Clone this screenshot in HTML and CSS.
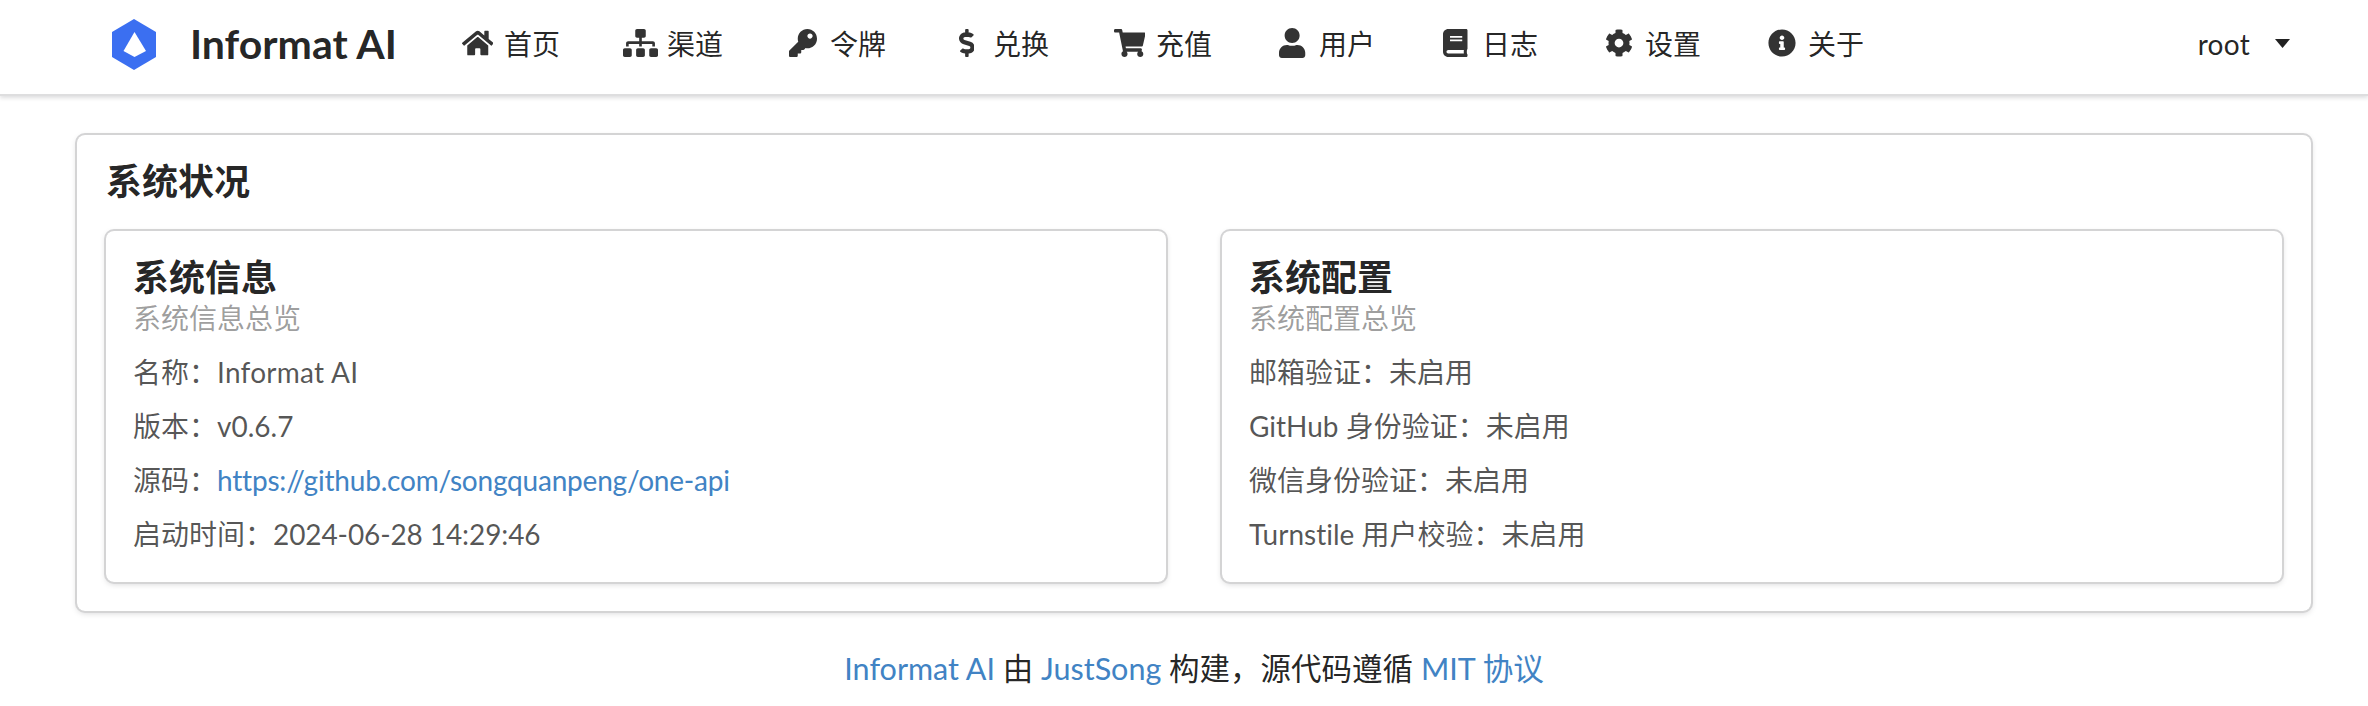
FILE: index.html
```html
<!DOCTYPE html>
<html lang="zh-CN">
<head>
<meta charset="utf-8">
<title>Informat AI</title>
<link rel="stylesheet" href="styles.css">
</head>
<body>
<header class="topbar">
  <a class="brand">
    <svg class="logo" viewBox="0 0 44 51"><path fill="#3b6ff1" d="M22 0L44 13V38L22 51L0 38V13Z"/><path fill="#fff" d="M22.500 13L34 32L22.500 38L11.500 32Z"/></svg>
    <span>Informat AI</span>
  </a>
  <a class="navitem"><span class="ico"><svg viewBox="0 0 576 512"><path d="M280.37 148.26L96 300.11V464a16 16 0 0 0 16 16l112.06-.29a16 16 0 0 0 15.92-16V368a16 16 0 0 1 16-16h64a16 16 0 0 1 16 16v95.64a16 16 0 0 0 16 16.05L464 480a16 16 0 0 0 16-16V300L295.67 148.26a12.19 12.19 0 0 0-15.3 0zM571.6 251.47L488 182.56V44.05a12 12 0 0 0-12-12h-56a12 12 0 0 0-12 12v72.61L318.47 43a48 48 0 0 0-61 0L4.34 251.47a12 12 0 0 0-1.6 16.9l25.5 31A12 12 0 0 0 45.15 301l235.22-193.74a12.19 12.19 0 0 1 15.3 0L530.9 301a12 12 0 0 0 16.9-1.6l25.5-31a12 12 0 0 0-1.7-16.93z"/></svg></span>首页</a>
  <a class="navitem"><span class="ico"><svg viewBox="0 0 640 512"><path d="M128 352H32c-17.67 0-32 14.33-32 32v96c0 17.67 14.33 32 32 32h96c17.67 0 32-14.33 32-32v-96c0-17.67-14.33-32-32-32zm-24-80h192v48h48v-48h192v48h48v-57.59c0-21.17-17.23-38.41-38.41-38.41H344v-64h40c17.67 0 32-14.33 32-32V32c0-17.67-14.33-32-32-32H256c-17.67 0-32 14.33-32 32v96c0 17.67 14.33 32 32 32h40v64H94.41C73.23 224 56 241.23 56 262.41V320h48v-48zm264 80h-96c-17.67 0-32 14.33-32 32v96c0 17.67 14.33 32 32 32h96c17.67 0 32-14.33 32-32v-96c0-17.67-14.33-32-32-32zm240 0h-96c-17.67 0-32 14.33-32 32v96c0 17.67 14.33 32 32 32h96c17.67 0 32-14.33 32-32v-96c0-17.67-14.33-32-32-32z"/></svg></span>渠道</a>
  <a class="navitem"><span class="ico"><svg viewBox="0 0 512 512"><path d="M512 176.001C512 273.203 433.202 352 336 352c-11.22 0-22.19-1.062-32.827-3.069l-24.012 27.014A23.999 23.999 0 0 1 261.223 384H224v40c0 13.255-10.745 24-24 24h-40v40c0 13.255-10.745 24-24 24H24c-13.255 0-24-10.745-24-24v-78.059c0-6.365 2.529-12.47 7.029-16.971l161.802-161.802C163.108 213.814 160 195.271 160 176 160 78.798 238.797.001 335.999 0 433.488-.001 512 78.511 512 176.001zM336 128c0 26.51 21.49 48 48 48s48-21.49 48-48-21.49-48-48-48-48 21.49-48 48z"/></svg></span>令牌</a>
  <a class="navitem"><span class="ico"><svg viewBox="0 0 288 512"><path d="M209.2 233.4l-108-31.6C88.7 198.2 80 186.5 80 173.5c0-16.3 13.2-29.5 29.5-29.5h66.3c12.2 0 24.2 3.7 34.2 10.5 6.1 4.1 14.3 3.1 19.5-2l34.8-34c7.1-6.9 6.1-18.4-1.8-24.5C238 74.8 207.4 64.1 176 64V16c0-8.8-7.2-16-16-16h-32c-8.8 0-16 7.2-16 16v48h-2.5C45.8 64-5.4 118.7.5 183.6c4.2 46.1 39.4 83.6 83.8 96.6l102.5 30c12.5 3.7 21.2 15.3 21.2 28.3 0 16.3-13.2 29.5-29.5 29.5h-66.3C100 368 88 364.3 78 357.5c-6.1-4.1-14.3-3.1-19.5 2l-34.8 34c-7.1 6.9-6.1 18.4 1.8 24.5 24.5 19.2 55.1 29.9 86.5 30v48c0 8.8 7.2 16 16 16h32c8.8 0 16-7.2 16-16v-48.2c46.6-.9 90.3-28.6 105.7-72.7 21.5-61.6-14.6-124.8-72.5-141.7z"/></svg></span>兑换</a>
  <a class="navitem"><span class="ico"><svg viewBox="0 0 576 512"><path d="M528.12 301.319l47.273-208C578.806 78.301 567.391 64 551.99 64H159.208l-9.166-44.81C147.758 8.021 137.93 0 126.529 0H24C10.745 0 0 10.745 0 24v16c0 13.255 10.745 24 24 24h69.883l70.248 343.435C147.325 417.1 136 435.222 136 456c0 30.928 25.072 56 56 56s56-25.072 56-56c0-15.674-6.447-29.835-16.824-40h209.647C430.447 426.165 424 440.326 424 456c0 30.928 25.072 56 56 56s56-25.072 56-56c0-22.172-12.888-41.332-31.579-50.405l5.517-24.276c3.413-15.018-8.002-29.319-23.403-29.319H218.117l-6.545-32h293.145c11.206 0 20.92-7.754 23.403-18.681z"/></svg></span>充值</a>
  <a class="navitem"><span class="ico ico-user"><svg viewBox="0 0 448 512"><path d="M224 256c70.700 0 128-57.300 128-128S294.700 0 224 0 96 57.300 96 128s57.300 128 128 128zm89.600 32h-16.700c-22.200 10.200-46.900 16-72.900 16s-50.600-5.800-72.900-16h-16.700C60.200 288 0 348.200 0 422.400V464c0 26.500 21.500 48 48 48h352c26.500 0 48-21.500 48-48v-41.600c0-74.200-60.200-134.400-134.400-134.400z"/></svg></span>用户</a>
  <a class="navitem"><span class="ico"><svg viewBox="0 0 448 512"><path d="M448 360V24c0-13.300-10.700-24-24-24H96C43 0 0 43 0 96v320c0 53 43 96 96 96h328c13.300 0 24-10.700 24-24v-16c0-7.500-3.500-14.300-8.900-18.700-4.200-15.400-4.200-59.300 0-74.700 5.400-4.300 8.900-11.100 8.900-18.600zM128 134c0-3.300 2.700-6 6-6h212c3.300 0 6 2.700 6 6v20c0 3.300-2.700 6-6 6H134c-3.300 0-6-2.700-6-6v-20zm0 64c0-3.300 2.700-6 6-6h212c3.300 0 6 2.700 6 6v20c0 3.300-2.700 6-6 6H134c-3.300 0-6-2.700-6-6v-20zm253.400 250H96c-17.700 0-32-14.300-32-32 0-17.600 14.400-32 32-32h285.400c-1.900 17.100-1.900 46.900 0 64z"/></svg></span>日志</a>
  <a class="navitem"><span class="ico"><svg viewBox="0 0 512 512"><path d="M487.400 315.700l-42.600-24.600c4.300-23.200 4.300-47 0-70.200l42.600-24.600c4.900-2.800 7.100-8.600 5.500-14-11.100-35.600-30-67.800-54.700-94.600-3.800-4.100-10-5.100-14.800-2.300L380.800 110c-17.900-15.400-38.500-27.300-60.800-35.100V25.800c0-5.600-3.900-10.500-9.400-11.700-36.700-8.200-74.300-7.800-109.200 0-5.500 1.200-9.400 6.100-9.400 11.700V75c-22.200 7.900-42.800 19.800-60.800 35.100L88.700 85.500c-4.900-2.800-11-1.900-14.800 2.300-24.700 26.700-43.600 58.900-54.700 94.600-1.700 5.400.6 11.200 5.500 14L67.300 221c-4.300 23.200-4.300 47 0 70.200l-42.600 24.600c-4.900 2.800-7.100 8.600-5.500 14 11.100 35.600 30 67.800 54.700 94.600 3.800 4.100 10 5.100 14.800 2.300l42.600-24.600c17.900 15.400 38.500 27.300 60.800 35.100v49.200c0 5.600 3.900 10.500 9.400 11.700 36.700 8.200 74.300 7.800 109.200 0 5.500-1.200 9.400-6.100 9.400-11.700v-49.200c22.200-7.900 42.800-19.800 60.800-35.100l42.600 24.600c4.900 2.800 11 1.900 14.800-2.300 24.700-26.700 43.600-58.900 54.700-94.600 1.500-5.500-.7-11.300-5.600-14.100zM256 336c-44.100 0-80-35.900-80-80s35.900-80 80-80 80 35.900 80 80-35.900 80-80 80z"/></svg></span>设置</a>
  <a class="navitem"><span class="ico"><svg viewBox="0 0 512 512"><path d="M256 8C119.043 8 8 119.083 8 256c0 136.997 111.043 248 248 248s248-111.003 248-248C504 119.083 392.957 8 256 8zm0 110c23.196 0 42 18.804 42 42s-18.804 42-42 42-42-18.804-42-42 18.804-42 42-42zm56 254c0 6.627-5.373 12-12 12h-88c-6.627 0-12-5.373-12-12v-24c0-6.627 5.373-12 12-12h12v-64h-12c-6.627 0-12-5.373-12-12v-24c0-6.627 5.373-12 12-12h64c6.627 0 12 5.373 12 12v100h12c6.627 0 12 5.373 12 12v24z"/></svg></span>关于</a>
  <a class="navitem usermenu"><span class="username">root</span><svg class="caret" viewBox="0 0 17 9"><path d="M1 0H16L8.500 9Z"/></svg></a>
</header>
<main class="panel">
  <h2 class="panel-title">系统状况</h2>
  <div class="cols">
    <section class="card">
      <h3 class="card-title">系统信息</h3>
      <div class="card-meta">系统信息总览</div>
      <p class="line">名称：<span class="latin-wide">Informat AI</span></p>
      <p class="line">版本：v0.6.7</p>
      <p class="line">源码：<a class="link link-url">https://github.com/songquanpeng/one-api</a></p>
      <p class="line">启动时间：<span class="date">2024-06-28 14:29:46</span></p>
    </section>
    <section class="card">
      <h3 class="card-title">系统配置</h3>
      <div class="card-meta">系统配置总览</div>
      <p class="line">邮箱验证：未启用</p>
      <p class="line">GitHub 身份验证：未启用</p>
      <p class="line">微信身份验证：未启用</p>
      <p class="line">Turnstile 用户校验：未启用</p>
    </section>
  </div>
</main>
<footer class="foot"><a class="link">Informat AI</a> 由 <a class="link">JustSong</a> 构建，源代码遵循 <a class="link">MIT 协议</a></footer>
</body>
</html>
```
FILE: styles.css
```css
* { box-sizing: border-box; }
html, body { margin: 0; padding: 0; background: #fff; }
body {
  font-family: Lato, "Noto Sans CJK SC", "Noto Sans", sans-serif;
  font-size: 28px;
  line-height: 40px;
  color: rgba(0,0,0,.87);
  font-variant-ligatures: none;
  overflow: hidden;
}
.topbar {
  display: flex;
  align-items: stretch;
  height: 96px;
  padding: 0 45px 0 80px;
  background: #fff;
  border-bottom: 2px solid rgba(34,36,38,.15);
  box-shadow: 0 2px 4px rgba(34,36,38,.15);
}
.brand, .navitem {
  display: flex;
  align-items: center;
  padding: 0 32px 7px;
}
.brand { font-size: 41px; font-weight: 700; color: rgba(0,0,0,.87); }
.logo { width: 44px; height: 51px; margin: 2px 34px 0 0; flex: none; }
.ico {
  display: flex;
  justify-content: center;
  width: 33px;
  margin: 0 10px 2px 0;
  flex: none;
}
.ico svg { height: 28px; width: auto; fill: #333; display: block; flex: none; }
.ico-user svg { height: 30px; }
.usermenu { margin-left: auto; }
.username { letter-spacing: .3px; }
.caret { width: 17px; height: 9px; margin-left: 24px; fill: rgba(0,0,0,.87); }
.panel {
  margin: 39px 57px 0 77px;
  padding: 24px 29px 28px;
  height: 476px;
  border-radius: 8px;
  box-shadow: 0 2px 6px 0 #d4d4d5, 0 0 0 2px #d4d4d5;
}
.panel-title {
  margin: 0 0 28px;
  font-size: 36px;
  font-weight: 700;
  line-height: 44px;
}
.cols { display: grid; grid-template-columns: 1fr 1fr; gap: 56px; }
.card {
  height: 351px;
  padding: 25px 27px;
  border-radius: 8px;
  box-shadow: 0 2px 6px 0 #d4d4d5, 0 0 0 2px #d4d4d5;
}
.card-title { margin: 0; font-size: 36px; font-weight: 700; line-height: 42px; }
.card-meta { color: rgba(0,0,0,.4); line-height: 40px; margin-bottom: 14px; }
.line { margin: 0 0 14px; color: rgba(0,0,0,.68); }
.link { color: #4183c4; }
.link-url { letter-spacing: -.2px; }
.latin-wide { letter-spacing: .27px; }
.date { letter-spacing: -.1px; }
.foot { margin-top: 37px; padding-left: 20px; text-align: center; font-size: 30.5px; }
```
